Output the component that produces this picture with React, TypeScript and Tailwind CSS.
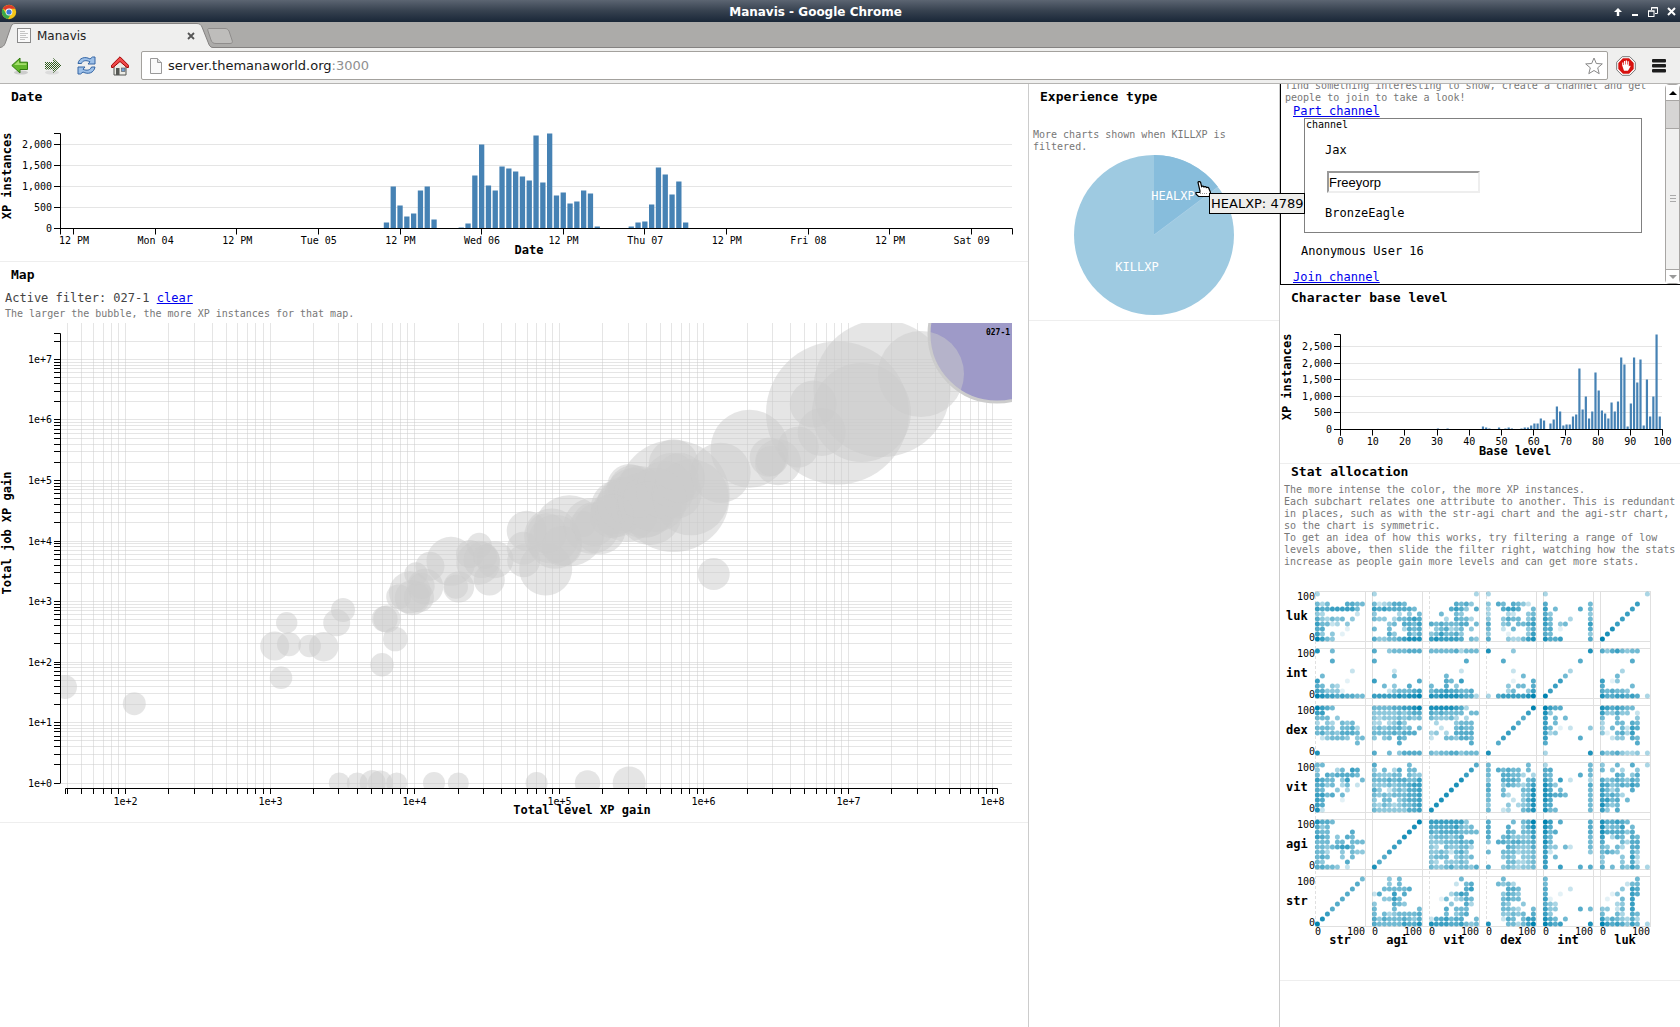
import type { ReactNode } from "react";

const MONO = "font-['DejaVu_Sans_Mono','Liberation_Mono',monospace]";
const SANS = "font-['DejaVu_Sans','Liberation_Sans',sans-serif]";

/* ---------- shared chart helpers ---------- */

interface TextProps {
  x: number;
  y: number;
  anchor?: "start" | "middle" | "end";
  children: ReactNode;
}

const TickLabel = ({ x, y, anchor = "middle", children }: TextProps) => (
  <text x={x} y={y} textAnchor={anchor} className="text-[10px] fill-black">
    {children}
  </text>
);

const AxisTitle = ({ x, y, anchor = "middle", children }: TextProps) => (
  <text x={x} y={y} textAnchor={anchor} className="text-xs font-bold fill-black">
    {children}
  </text>
);

const SideTitle = ({ y, children }: { y: number; children: ReactNode }) => (
  <text
    transform={`translate(11 ${y}) rotate(-90)`}
    textAnchor="middle"
    className="text-xs font-bold fill-black"
  >
    {children}
  </text>
);

const crisp = (n: number) => Math.floor(n) + 0.5;

const PanelTitle = ({ children }: { children: ReactNode }) => (
  <h2 className="px-[11px] pt-px text-[13px] leading-6 font-bold">{children}</h2>
);

/* ---------- date chart ---------- */

const dateRuns: { start: number; values: number[] }[] = [
  { start: 0, values: [6, 42, 23, 12, 15, 38, 42, 9] },
  {
    start: 11,
    values: [1, 5, 53, 84, 43, 38, 62, 60, 57, 52, 48, 93, 46, 95, 33, 36, 25, 27, 38, 35, 2],
  },
  { start: 36, values: [2, 6, 7, 24, 61, 54, 34, 47, 6] },
];

const dateTicks = [
  "12 PM", "Mon 04", "12 PM", "Tue 05", "12 PM", "Wed 06",
  "12 PM", "Thu 07", "12 PM", "Fri 08", "12 PM", "Sat 09",
];

const DateChart = () => {
  const base = 119.5;
  return (
    <svg width="1027" height="152" className="block">
      {[500, 1000, 1500, 2000].map((v) => (
        <line key={v} x1="61" x2="1012" y1={crisp(base - v * 0.042)} y2={crisp(base - v * 0.042)} stroke="#e5e5e5" />
      ))}
      {dateRuns.flatMap(({ start, values }) =>
        values.map((h, i) => (
          <rect key={start + i} x={383.8 + (start + i) * 6.8} y={base - h} width="5.3" height={h} fill="steelblue" />
        ))
      )}
      <path d={`M54 24.5H60.5V${base + 6}`} fill="none" stroke="#000" />
      <path d={`M54 ${base}H1012.5V${base + 6}`} fill="none" stroke="#000" />
      {[0, 500, 1000, 1500, 2000].map((v) => (
        <g key={v}>
          <line x1="54" x2="60" y1={crisp(base - v * 0.042)} y2={crisp(base - v * 0.042)} stroke="#000" />
          <TickLabel x={52} y={crisp(base - v * 0.042) + 3} anchor="end">
            {v.toLocaleString("en-US")}
          </TickLabel>
        </g>
      ))}
      {dateTicks.map((label, i) => (
        <g key={i}>
          <line x1={crisp(73.6 + i * 81.6)} x2={crisp(73.6 + i * 81.6)} y1={base} y2={base + 6} stroke="#000" />
          <TickLabel x={74 + i * 81.6} y={135}>{label}</TickLabel>
        </g>
      ))}
      <SideTitle y={67}>XP instances</SideTitle>
      <AxisTitle x={529} y={145}>Date</AxisTitle>
    </svg>
  );
};

/* ---------- map bubble chart ---------- */

// [x, y, radius]
const bubbles: [number, number, number][] = [
  [65, 367, 12], [134.3, 383.7, 11.5], [281, 357.7, 11.3], [274.7, 326, 14.5],
  [289, 324.3, 12], [286.7, 302.7, 10.7], [309.7, 326, 11.3], [323.7, 326.7, 14.7],
  [336.7, 302.7, 13.5], [343, 290, 12], [382, 344.7, 11.7], [395.3, 319, 12.3],
  [384.7, 299, 13], [387, 299, 13.7], [339.3, 463, 10.5], [357.3, 463, 10.5],
  [372.7, 463, 13], [380.3, 463, 12.5], [396.7, 463, 10.5], [434, 463, 11],
  [458.3, 463, 10.5], [536.6, 463, 11], [587.5, 463, 12.7], [629.2, 463, 16.5],
  [398.7, 276.7, 12.5], [410, 272.3, 21], [416, 254, 11.7], [430, 246.3, 14.5],
  [425.3, 266.7, 18], [412.3, 277.7, 17.5], [419, 277.3, 15], [421.7, 266, 13],
  [451, 241.3, 24.5], [458.7, 267, 15.5], [456, 266.7, 12], [479.3, 225.3, 12.5],
  [470, 234, 14], [478.3, 242.7, 22], [481.7, 240, 18], [495, 239.7, 18.5],
  [489.3, 260, 15.5], [485, 236.7, 12], [526.7, 210.7, 20], [523.3, 228.3, 16.5],
  [523.7, 240.7, 16.5], [545.7, 249, 26.5], [569.3, 210.7, 35.5], [551.7, 216, 27.5],
  [555, 221.7, 27], [546.7, 213.3, 20], [562, 226, 20], [583, 204, 13],
  [591.7, 206, 28], [600, 208.3, 26], [594, 204, 22], [629.3, 166, 22],
  [633.3, 170, 25], [618, 187, 27], [617, 192, 25], [627, 190, 32],
  [634, 178, 30], [643, 185, 33], [646.7, 187, 30], [624, 184, 27],
  [640, 172, 26], [650, 193, 32], [612, 196, 22], [673.7, 176, 56],
  [690.7, 177.3, 38], [673.7, 144.3, 25], [671.7, 160, 27], [676.7, 173.3, 25],
  [680, 158, 25], [665, 170, 29], [655, 180, 32], [720.7, 152.7, 30],
  [713.7, 254, 16], [749.6, 128.7, 39], [769.2, 137.3, 19.5], [778, 142.3, 23],
  [771, 141, 15], [798.3, 127, 20.5], [821.7, 112, 24], [813.2, 84, 23.5],
  [837.5, 93, 71.5], [861.5, 92.5, 49.5], [882, 68.5, 68.5],
];

const logTicks = (from: number, to: number) => {
  const ticks: number[] = [];
  for (let e = Math.floor(from); e <= to; e++) {
    for (let m = 1; m < 10; m++) {
      const l = e + Math.log10(m);
      if (l >= from && l <= to) ticks.push(l);
    }
  }
  return ticks;
};

const MapChart = () => {
  const sx = (l: number) => crisp(125.4 + (l - 2) * 144.6);
  const sy = (l: number) => crisp(463.1 - l * 60.52);
  const xTicks = logTicks(1.583, 8.01);
  const yTicks = logTicks(0, 7.43);
  return (
    <svg width="1027" height="502" className="block">
      <clipPath id="map-plot">
        <rect x="61" y="3" width="951" height="465" />
      </clipPath>
      <g stroke="#ccc" strokeOpacity="0.5">
        {xTicks.map((l) => <line key={l} x1={sx(l)} x2={sx(l)} y1="3" y2="468" />)}
        {yTicks.map((l) => <line key={l} x1="61" x2="1012" y1={sy(l)} y2={sy(l)} />)}
      </g>
      <g clipPath="url(#map-plot)">
        <g fill="#ccc" fillOpacity="0.5">
          {bubbles.map(([x, y, r], i) => <circle key={i} cx={x} cy={y} r={r} />)}
        </g>
        <circle cx="997" cy="14" r="68" fill="#9e9ac8" stroke="#ccc" strokeWidth="3" />
        <circle cx="921" cy="54" r="43" fill="#ccc" fillOpacity="0.5" />
        <text x="998" y="15" textAnchor="middle" className="text-[8px] font-bold">027-1</text>
      </g>
      <path d="M54 13.5H60.5V463.5" fill="none" stroke="#000" />
      <path d="M65.5 474V468.5H997.5V474" fill="none" stroke="#000" />
      {yTicks.map((l) => (
        <g key={l}>
          <line x1="54" x2="60" y1={sy(l)} y2={sy(l)} stroke="#000" />
          {Number.isInteger(l) && <TickLabel x={52} y={sy(l) + 3} anchor="end">{`1e+${l}`}</TickLabel>}
        </g>
      ))}
      {xTicks.map((l) => (
        <g key={l}>
          <line x1={sx(l)} x2={sx(l)} y1="468" y2="474" stroke="#000" />
          {Number.isInteger(l) && <TickLabel x={sx(l)} y={485}>{`1e+${l}`}</TickLabel>}
        </g>
      ))}
      <SideTitle y={213}>Total job XP gain</SideTitle>
      <AxisTitle x={582} y={494}>Total level XP gain</AxisTitle>
    </svg>
  );
};

/* ---------- base level chart ---------- */

const levels: Record<number, number> = {
  30: 1, 33: 1, 44: 3, 45: 2, 46: 1, 49: 2, 51: 1, 52: 2, 53: 1, 56: 1, 57: 2, 58: 2, 59: 4,
  60: 6, 61: 6, 62: 11, 63: 9, 65: 6, 66: 10, 67: 23, 68: 18, 69: 4, 70: 5, 71: 5, 72: 13,
  73: 15, 74: 61, 75: 20, 76: 33, 77: 11, 78: 18, 79: 57, 80: 39, 81: 19, 82: 16, 83: 11,
  84: 27, 85: 18, 86: 28, 87: 72, 88: 65, 89: 3, 90: 26, 91: 72, 92: 47, 93: 70, 94: 4,
  95: 50, 96: 13, 97: 33, 98: 95, 99: 13,
};

const LevelChart = () => {
  const base = 119.5;
  const ys = [0, 500, 1000, 1500, 2000, 2500];
  return (
    <svg width="400" height="153" className="block">
      {ys.slice(1).map((v) => (
        <line key={v} x1="61" x2="382" y1={crisp(base - v * 0.0332)} y2={crisp(base - v * 0.0332)} stroke="#e5e5e5" />
      ))}
      {Object.entries(levels).map(([level, h]) => (
        <rect key={level} x={60.4 + Number(level) * 3.215} y={base - h} width="2.2" height={h} fill="steelblue" />
      ))}
      <path d={`M54 24.5H60.5V${base + 6}`} fill="none" stroke="#000" />
      <path d={`M54 ${base}H382.5V${base + 6}`} fill="none" stroke="#000" />
      {ys.map((v) => (
        <g key={v}>
          <line x1="54" x2="60" y1={crisp(base - v * 0.0332)} y2={crisp(base - v * 0.0332)} stroke="#000" />
          <TickLabel x={52} y={crisp(base - v * 0.0332) + 3} anchor="end">
            {v.toLocaleString("en-US")}
          </TickLabel>
        </g>
      ))}
      {Array.from({ length: 11 }, (_, i) => (
        <g key={i}>
          <line x1={crisp(60.5 + i * 32.2)} x2={crisp(60.5 + i * 32.2)} y1={base} y2={base + 6} stroke="#000" />
          <TickLabel x={60.5 + i * 32.2} y={135}>{i * 10}</TickLabel>
        </g>
      ))}
      <SideTitle y={67}>XP instances</SideTitle>
      <AxisTitle x={235} y={145}>Base level</AxisTitle>
    </svg>
  );
};

/* ---------- stat matrix ---------- */

const stats = ["str", "agi", "vit", "dex", "int", "luk"];

// Ten rows per subchart, highest value first; each digit is the intensity of one bin.
const statBins: Record<string, string[]> = {
  "str-luk": ["3", "", "535...6655", "766777775", "43......2", "643545.4", "75523.4", "66....1", "74.4.1", "9754"],
  "agi-luk": ["3", "", "5234665", "767666665", "4....3.4.5", "544.355676", "...45.6657", "5..5..3656", "...64..646", "6445567888"],
  "vit-luk": [".........3", "", ".....6564", "....6764.6", "..5..54", "...3.6553", "65655566.5", ".456345.4", "4575564", "7877776.54"],
  "dex-luk": ["3", "", "4.65.6542", "3..6776..5", "3...32..45", "4..4655.46", "6..45.5567", "5..2.5..46", "4...1...47", "6...433578"],
  "int-luk": ["3", "", "6........5", "7.5....6.5", "64.......4", "75...3...5", "75.45....7", "66.1.....6", "65.......4", "8667.....6"],
  "luk-luk": [".........3", "", ".......7", "......7", ".....7", "....7", "...7", "..8", ".8", "9"],
  "str-int": ["8..5", "", "...6", "", ".......2", ".5", "7.....1", "65.43", "764441", "9877676655"],
  "agi-int": ["6..4555666", "", "6", "", "....2", "....5", "7........6", "..5.4..6", "...2455567", "7777787889"],
  "vit-int": ["5555563555", "", ".......6", "", "......2", "...5", "...65.7", "5..6.4", "566766556", "8788887663"],
  "dex-int": ["8....4", "", "...6", "", ".....2", ".......5", ".....1...6", "....4.55.6", "....35..47", "3.67777789"],
  "int-int": [".........8", "", ".......6", "", ".....3", "....5", "...7", "..7", ".7", "9"],
  "str-dex": ["9765", "77", "555.4", "3.43.545", "5554.5563", "564546665", ".245554.45", "........5", "", "8"],
  "agi-dex": ["5555667789", "4444454566", "4344454545", "33.3464", "45455645.5", "555565666", "4.45.65", ".....6", "", "6..5.46666"],
  "vit-dex": ["88888763", "6565555.55", "544453.3", ".3...4555", "..2..5655", "34.3.6666", "2..554665", "........6", "", "5455664555"],
  "dex-dex": [".........9", "........7", ".......6", "......6", ".....7", "....7", "...7", "..6", "", "8"],
  "str-vit": ["55", "4...35.76", "5.6566665", "7655.47..5", "6645.35.2", "65..4.3", "7756.5", "76...1", "76", "82"],
  "agi-vit": ["6......5", "4.5.36.55", "544455.544", "5556566557", "4445455677", "64.2454667", "5454555667", "4.55.45667", "4354345567", "5444444667"],
  "vit-vit": [".........6", "........7", ".......7", "......8", ".....8", "....8", "...8", "..8", ".8", "8"],
  "str-agi": ["8665", "645", "655....6", "765.4.65", "555.55.555", "55456775", "553..4.544", "565..4.5", "54....6", "66554.2"],
  "agi-agi": [".........9", "........8", ".......8", "......8", ".....7", "....7", "...7", "..6", ".6", "8"],
  "str-str": [".........5", "........6", ".......6", "......6", ".....6", "....6", "...6", "..7", ".8", "9"],
};

const intensity = (xStat: string, yStat: string, col: number, row: number) => {
  const direct = statBins[`${xStat}-${yStat}`];
  const code = direct
    ? direct[9 - row][col]
    : statBins[`${yStat}-${xStat}`][9 - col][row];
  return Number(code) || 0;
};

const StatMatrix = () => {
  const pitch = 57;
  const rows = [...stats].reverse();
  return (
    <svg width="400" height="402" className="block">
      {stats.map((s, i) => {
        const near = 35.5 + i * pitch;
        const top = 13.5 + i * pitch;
        return (
          <g key={s} stroke="#e0e0e0">
            <line x1={near} x2={near} y1="13" y2="349" strokeDasharray={i === 0 || i === 2 || i === 3 ? "3 2" : undefined} />
            <line x1={near + 50} x2={near + 50} y1="13" y2="349" />
            <line x1="35" x2="371" y1={top} y2={top} />
            <line x1="35" x2="371" y1={top + 50} y2={top + 50} />
          </g>
        );
      })}
      {rows.map((yStat, j) =>
        stats.map((xStat, i) => (
          <g key={`${xStat}-${yStat}`} transform={`translate(${37.4 + i * pitch} ${61 + j * pitch})`} fill="#0083b0">
            {Array.from({ length: 100 }, (_, n) => {
              const col = n % 10;
              const row = Math.floor(n / 10);
              const level = intensity(xStat, yStat, col, row);
              if (!level) return null;
              return <circle key={n} cx={col * 5} cy={-row * 5} r="2.5" opacity={level / 9} />;
            })}
          </g>
        ))
      )}
      {rows.map((s, j) => (
        <g key={s}>
          <TickLabel x={35} y={22 + j * pitch} anchor="end">100</TickLabel>
          <TickLabel x={35} y={63 + j * pitch} anchor="end">0</TickLabel>
          <AxisTitle x={6} y={42 + j * pitch} anchor="start">{s}</AxisTitle>
        </g>
      ))}
      {stats.map((s, i) => (
        <g key={s}>
          <TickLabel x={38 + i * pitch} y={357}>0</TickLabel>
          <TickLabel x={76 + i * pitch} y={357}>100</TickLabel>
          <AxisTitle x={60 + i * pitch} y={366}>{s}</AxisTitle>
        </g>
      ))}
    </svg>
  );
};

/* ---------- experience pie ---------- */

const ExperiencePie = () => (
  <svg width="160" height="160" className="mx-auto block">
    <circle cx="80" cy="80" r="80" fill="#9ecae1" />
    <path d="M80 80V0A80 80 0 0 1 144 32Z" fill="#87bddc" />
    <path d="M80 80L144 32" stroke="#a9cfe6" />
    <text x="99" y="45" textAnchor="middle" className="text-xs fill-white">HEALXP</text>
    <text x="63" y="116" textAnchor="middle" className="text-xs fill-white">KILLXP</text>
  </svg>
);

const HandCursor = () => (
  <svg width="17" height="17" viewBox="0 0 17 17" className="absolute top-[97px] left-[166px]">
    <path
      d="M3 1.5C3 .2 5.4 .2 5.6 1.5L6.6 5.5C7.4 4.7 8.8 5 9 5.9C9.8 5.3 11.2 5.6 11.4 6.5C12.4 6 13.7 6.4 13.9 7.5L15.4 11V14L14 15.5H3.5L1 13V11.5H4.8L5 10Z"
      fill="#fff"
      stroke="#000"
      strokeWidth="1.2"
    />
    <path d="M5 12.5H13" stroke="#999" strokeDasharray="1 1" />
  </svg>
);

/* ---------- browser chrome ---------- */

const ChromeLogo = () => (
  <svg width="16" height="16" viewBox="0 0 16 16">
    <circle cx="8" cy="8" r="7.2" fill="#f5c518" />
    <path d="M8 8L1.8 4.4A7.2 7.2 0 0 1 14.4 4.8H8Z" fill="#dd3b2c" />
    <path d="M1.8 4.4A7.2 7.2 0 0 0 7 15.1L10 10L5 9.6Z" fill="#3aa84b" />
    <circle cx="8" cy="8" r="3.4" fill="#fff" />
    <circle cx="8" cy="8" r="2.6" fill="#3b78d8" />
  </svg>
);

const TitleBar = () => (
  <header className="flex h-[22px] items-center bg-linear-to-b from-[#5c6572] via-[#36414f] to-[#1a2738] px-px pt-px text-white">
    <ChromeLogo />
    <h1 className={`${SANS} flex-1 text-center text-xs leading-6 font-bold`}>Manavis - Google Chrome</h1>
    <div className="flex items-center gap-[9px] pr-[3px]">
      <button aria-label="Keep above">
        <svg width="8" height="8" viewBox="0 0 8 8" className="block">
          <path d="M4 0L8 4H5.2V8H2.8V4H0Z" fill="#fff" />
        </svg>
      </button>
      <button aria-label="Minimize">
        <svg width="8" height="10" className="block"><rect x="1" y="7" width="6" height="2" fill="#fff" /></svg>
      </button>
      <button aria-label="Restore">
        <svg width="10" height="10" viewBox="0 0 10 10" className="block" fill="none" stroke="#fff">
          <path d="M3.5 3V.5H9.5V6.5H7" />
          <path d="M3 1H10" />
          <rect x=".5" y="4" width="5.5" height="5.5" />
          <path d="M0 4H6.5" />
        </svg>
      </button>
      <button aria-label="Close window">
        <svg width="9" height="9" viewBox="0 0 9 9" className="block">
          <path d="M1 1L8 8M8 1L1 8" stroke="#fff" strokeWidth="2" />
        </svg>
      </button>
    </div>
  </header>
);

const TabStrip = () => (
  <div className="relative flex h-[26px] items-end border-b border-[#848281] bg-[#acaba9]">
    <svg width="236" height="26" className="absolute top-0 left-0">
      <path
        d="M0 25.5C4 25 5 22 6 19L10.5 6C11.5 3 12.5 1.5 15 1.5H197C200 1.5 201 3 202 5L208 20C209 23 210 25.5 213 25.5V26H0Z"
        fill="#efefee"
      />
      <path
        d="M0 25.5C4 25 5 22 6 19L10.5 6C11.5 3 12.5 1.5 15 1.5H197C200 1.5 201 3 202 5L208 20C209 23 210 25.5 213 25.5"
        fill="none"
        stroke="#848281"
      />
      <path
        d="M209 6.5H225C227 6.5 228 7.5 229 9L232 18C233 20.5 232 21.5 230 21.5H216C213 21.5 212 20.5 211 18L208 9C207.5 7.5 207.5 6.5 209 6.5Z"
        fill="#bebdbb"
        stroke="#8f8d8c"
      />
    </svg>
    <div className="relative flex h-[25px] w-[200px] items-center pt-0.5 pl-[17px]">
      <svg width="14" height="16" viewBox="0 0 14 16">
        <rect x=".5" y=".5" width="13" height="14" fill="#fafafa" stroke="#8a8a8a" />
        <path d="M3 3.5H8M3 5.5H11M3 7.5H9M3 9.5H11M3 11.5H8" stroke="#c4c4c4" />
      </svg>
      <span className={`${SANS} ml-[6px] flex-1 text-xs text-[#222]`}>Manavis</span>
      <button aria-label="Close tab" className="mr-[5px]">
        <svg width="8" height="8" viewBox="0 0 8 8" className="block">
          <path d="M1 1L7 7M7 1L1 7" stroke="#555" strokeWidth="1.8" />
        </svg>
      </button>
    </div>
  </div>
);

const Toolbar = () => (
  <div className="flex h-9 items-center border-b border-[#b5b4b2] bg-[#efefee] pr-[14px] pl-[11px]">
    <div className="flex items-center gap-[15px]">
      <button aria-label="Back">
        <svg width="18" height="18" viewBox="0 0 18 18" className="block">
          <ellipse cx="10" cy="15.5" rx="7" ry="2" fill="#ccc" />
          <path d="M.8 8.5L9 1V5.2H16.5V12.5H9V16Z" fill="#62b62b" stroke="#2f7a0c" />
          <path d="M2.5 8.5L8 3.5V6.3H15.4V8H3Z" fill="#a4dd6c" />
        </svg>
      </button>
      <button aria-label="Forward">
        <svg width="18" height="18" viewBox="0 0 18 18" className="block">
          <defs>
            <pattern id="dither" width="2" height="2" patternUnits="userSpaceOnUse">
              <rect width="1" height="1" fill="#2f5a1c" />
              <rect x="1" y="1" width="1" height="1" fill="#2f5a1c" />
            </pattern>
          </defs>
          <ellipse cx="8" cy="15.5" rx="7" ry="2" fill="#dcdcdc" />
          <path d="M17.5 8.5L9 1V5H1V12.5H9V16Z" fill="url(#dither)" />
        </svg>
      </button>
      <button aria-label="Reload">
        <svg width="19" height="19" viewBox="0 0 19 19" className="block">
          <path d="M1 7.5C2 2 8 0 13 3L15.5 1H18V8H11L13 5.8C9 3.8 5.5 4.5 4.5 7.5Z" fill="#9dc0e8" stroke="#3465a4" />
          <path d="M18 11C17 17 11 18.8 6 16L3.5 18H1V11H8L6 13.2C10 15.2 13.5 14 14.5 11Z" fill="#9dc0e8" stroke="#3465a4" />
        </svg>
      </button>
      <button aria-label="Home">
        <svg width="18" height="20" viewBox="0 0 18 20" className="block">
          <path d="M3 9L9 3.5L15 9V19H3Z" fill="#ecece6" stroke="#555753" />
          <rect x="5" y="12" width="3.5" height="7" fill="#555753" />
          <rect x="10.5" y="12" width="3.5" height="3.5" fill="#729fcf" stroke="#555" strokeWidth=".6" />
          <path d="M9 .8L17.4 9.2V11.5H16L9 5.5L2 11.5H.6V9.2Z" fill="#ef4a4a" stroke="#a40000" />
        </svg>
      </button>
    </div>
    <div className="ml-3 flex h-[29px] flex-1 items-center rounded-xs border border-[#a3a19d] bg-white pl-2">
      <svg width="12" height="16" viewBox="0 0 12 16">
        <path d="M.5 .5H7.5L11.5 4.5V15.5H.5Z" fill="#fafafa" stroke="#999" />
        <path d="M7.5 .5V4.5H11.5" fill="#ddd" stroke="#999" />
      </svg>
      {/* host is dark, port is dimmed */}
      <div className={`${SANS} ml-[6px] flex-1 text-[13px] text-[#8f8f8f]`}>
        <span className="text-[#1a1a1a]">server.themanaworld.org</span>:3000
      </div>
      <button aria-label="Bookmark this page" className="mr-1">
        <svg width="18" height="18" viewBox="0 0 18 18" className="block">
          <path
            d="M9 1L11.3 6.5L17.3 6.9L12.7 10.8L14.2 16.7L9 13.5L3.8 16.7L5.3 10.8L.7 6.9L6.7 6.5Z"
            fill="#fff"
            stroke="#888"
          />
        </svg>
      </button>
    </div>
    <button aria-label="AdBlock" className="ml-2">
      <svg width="20" height="20" viewBox="0 0 20 20" className="block">
        <path d="M6.2 .7H13.8L19.3 6.2V13.8L13.8 19.3H6.2L.7 13.8V6.2Z" fill="#fff" stroke="#777" />
        <path d="M6.9 2.3H13.1L17.7 6.9V13.1L13.1 17.7H6.9L2.3 13.1V6.9Z" fill="#d7120f" />
        <path d="M6.2 9.5V6.5H7.4V9H8V5H9.2V8.5H9.8V4.4H11V8.5H11.6V5.2H12.8V10.5L14 9.5L14.6 10.3L12 14.8H8Z" fill="#fff" />
      </svg>
    </button>
    <button aria-label="Menu" className="ml-4">
      <svg width="14" height="14" viewBox="0 0 14 14" className="block" fill="#1c1c1c">
        <rect y="0" width="14" height="3.5" rx="1" />
        <rect y="5" width="14" height="3.5" rx="1" />
        <rect y="10" width="14" height="3.5" rx="1" />
      </svg>
    </button>
  </div>
);

/* ---------- channel panel ---------- */

const ChannelScrollbar = () => (
  <div className="flex w-[15px] flex-col rounded-sm border border-[#a8a6a4] bg-[#f0f0ef]">
    <button aria-label="Scroll up" className="flex h-[15px] items-center justify-center bg-white">
      <svg width="8" height="4"><path d="M0 4L4 0L8 4Z" fill="#000" /></svg>
    </button>
    <div className="h-[29px] border-y border-[#a8a6a4] bg-[#d6d5d4]" />
    <div className="flex flex-1 items-center justify-center">
      <svg width="6" height="8"><path d="M0 .5H6M0 3.5H6M0 6.5H6" stroke="#aaa" /></svg>
    </div>
    <button aria-label="Scroll down" className="flex h-[14px] items-center justify-center border-t border-[#a8a6a4] bg-white">
      <svg width="8" height="4"><path d="M0 0H8L4 4Z" fill="#999" /></svg>
    </button>
  </div>
);

const ChannelPanel = () => (
  <section className="flex h-[201px] overflow-hidden border-b border-l border-black">
    <div className="-mt-1 flex-1 pl-1">
      <p className="text-[10px] leading-3 text-[#777]">
        find something interesting to show, create a channel and get
        <br />
        people to join to take a look!
      </p>
      <a href="#part" className="ml-2 block w-fit text-xs leading-[14px] text-[#0000ee] underline">Part channel</a>
      <div className="ml-[19px] h-[115px] w-[338px] border border-[#808080] text-xs">
        <label htmlFor="nick" className="block pl-px text-[10px] leading-3">channel</label>
        <div className="mt-[11px] ml-5 leading-4">Jax</div>
        <input
          id="nick"
          defaultValue="Freeyorp"
          className="mt-[13px] ml-[22px] block h-[22px] w-[153px] border-2 border-t-[#999] border-r-[#eee] border-b-[#eee] border-l-[#999] font-['Liberation_Sans',sans-serif] text-[13px]"
        />
        <div className="mt-3 ml-5 leading-4">BronzeEagle</div>
      </div>
      <div className="mt-[10px] ml-4 text-xs leading-4">Anonymous User 16</div>
      <a href="#join" className="mt-[10px] ml-2 block w-fit text-xs leading-4 text-[#0000ee] underline">Join channel</a>
    </div>
    <ChannelScrollbar />
  </section>
);

export default function App() {
  return (
    <div className={`${MONO} flex min-h-screen flex-col bg-white text-black`}>
      <TitleBar />
      <TabStrip />
      <Toolbar />
      <main className="flex flex-1 items-stretch">
        <div className="min-w-0 flex-1">
          <section className="border-b border-[#eee]">
            <PanelTitle>Date</PanelTitle>
            <DateChart />
          </section>
          <section className="border-b border-[#eee]">
            <PanelTitle>Map</PanelTitle>
            <p className="px-[5px] pt-px text-xs leading-5 text-[#444]">
              Active filter: 027-1 <a href="#clear" className="text-[#0000ee] underline">clear</a>
            </p>
            <p className="px-[5px] pb-px text-[10px] leading-[11px] text-[#777]">
              The larger the bubble, the more XP instances for that map.
            </p>
            <MapChart />
          </section>
        </div>

        <div className="w-[251px] border-l border-[#ccc]">
          <section className="relative border-b border-[#eee] pb-[5px]">
            <PanelTitle>Experience type</PanelTitle>
            <p className="mt-5 mb-[2px] px-1 text-[10px] leading-3 text-[#777]">
              More charts shown when KILLXP is filtered.
            </p>
            <ExperiencePie />
            <HandCursor />
            <div
              role="tooltip"
              className={`${SANS} absolute top-[109px] left-[180px] z-10 border border-black bg-[#eeeeec] px-px text-[13px] leading-[19px] whitespace-nowrap`}
            >
              HEALXP: 4789
            </div>
          </section>
        </div>

        <div className="w-[401px] border-l border-[#ccc]">
          <ChannelPanel />
          <section className="border-b border-[#eee]">
            <PanelTitle>Character base level</PanelTitle>
            <LevelChart />
          </section>
          <section className="border-b border-[#eee]">
            <h2 className="px-[11px] pb-1 text-[13px] leading-4 font-bold">Stat allocation</h2>
            <div className="pb-[10px] pl-1 text-[10px] leading-3 text-[#777]">
              <p>The more intense the color, the more XP instances.</p>
              <p>
                Each subchart relates one attribute to another. This is redundant in places, such as with the
                str-agi chart and the agi-str chart, so the chart is symmetric.
              </p>
              <p>
                To get an idea of how this works, try filtering a range of low levels above, then slide the
                filter right, watching how the stats increase as people gain more levels and can get more stats.
              </p>
            </div>
            <StatMatrix />
          </section>
        </div>
      </main>
    </div>
  );
}
